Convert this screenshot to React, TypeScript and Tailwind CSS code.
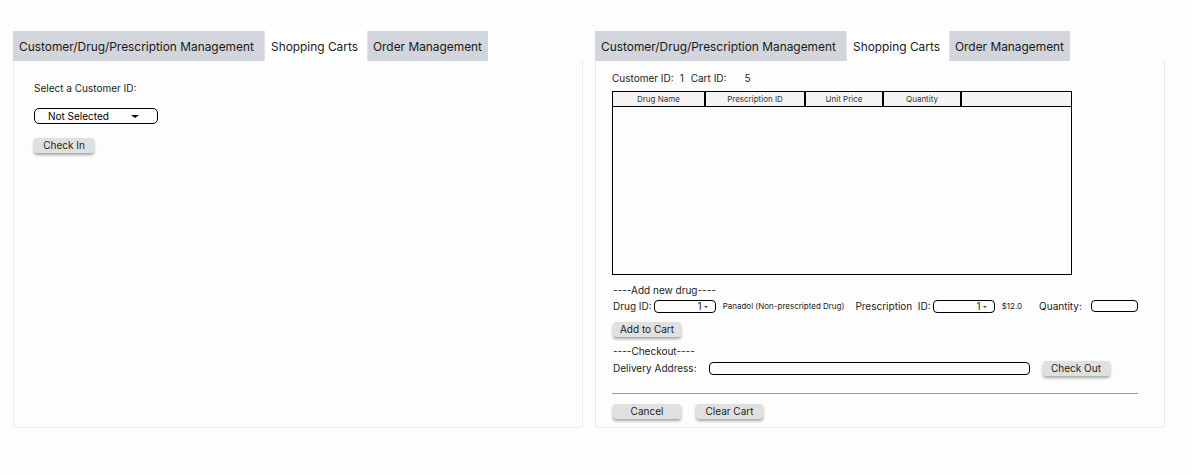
import React from "react";

const font = { fontFamily: "Inter, 'Noto Sans', sans-serif" };

function Tabs() {
  return (
    <div className="flex h-[30px] text-[11.9px] text-[#1a1a1a] whitespace-nowrap">
      <div className="w-[251px] bg-[#d2d5dc] flex items-center pl-[6px] pt-[1px]">Customer/Drug/Prescription Management</div>
      <div className="w-[104px] bg-white border-x-[1.5px] border-[#e2e2e2] flex items-center pl-[6px] pt-[1px]">Shopping Carts</div>
      <div className="w-[120px] bg-[#d2d5dc] flex items-center pl-[5px] pt-[1px]">Order Management</div>
    </div>
  );
}

function Btn({ children, w }: { children: React.ReactNode; w: string }) {
  return (
    <div className={`${w} h-[15px] bg-[#e0e0e0] rounded-[3px] shadow-[0_2px_3px_rgba(0,0,0,0.35)] flex items-center justify-center text-[10px] text-[#222] whitespace-nowrap`}>
      {children}
    </div>
  );
}

function MiniSelect({ w }: { w: string }) {
  return (
    <div className={`${w} h-[13px] border border-black rounded-[4px] flex items-center justify-end pr-[7px] text-[10px] leading-none`}>
      <span>1</span>
      <span className="ml-[2px] mt-[1px] w-0 h-0 border-l-[2px] border-r-[2px] border-t-[2px] border-l-transparent border-r-transparent border-t-[#444]"></span>
    </div>
  );
}

function LeftPanel() {
  return (
    <div className="w-[570px]">
      <Tabs />
      <div className="h-[367px] border border-[#ececec] border-t-0 rounded-b-[4px] pt-[21px] pl-[20px]">
        <div className="text-[10px] text-[#222] leading-[12px]">Select a Customer ID:</div>
        <div className="mt-[14px] w-[124px] h-[16px] border border-black rounded-[5px] flex items-center text-[10px] pl-[13px]">
          <span>Not Selected</span>
          <span className="ml-[22px] w-0 h-0 border-l-[4px] border-r-[4px] border-t-[3px] border-l-transparent border-r-transparent border-t-black"></span>
        </div>
        <div className="mt-[14px]">
          <Btn w="w-[60px]">Check In</Btn>
        </div>
      </div>
    </div>
  );
}

function RightPanel() {
  const cols = [
    { n: "Drug Name", w: "w-[93px]" },
    { n: "Prescription ID", w: "w-[100px]" },
    { n: "Unit Price", w: "w-[78px]" },
    { n: "Quantity", w: "w-[78px]" },
    { n: "", w: "flex-1" },
  ];
  return (
    <div className="w-[570px]">
      <Tabs />
      <div className="h-[367px] border border-[#ececec] border-t-0 rounded-b-[4px] pt-[11px] pl-[16px] pr-[26px] text-[#222]">
        <div className="text-[10px] leading-[12px] flex whitespace-nowrap">
          <span>Customer ID:</span>
          <span className="ml-[6px]">1</span>
          <span className="ml-[7px]">Cart ID:</span>
          <span className="ml-[18px]">5</span>
        </div>
        <div className="mt-[7px] w-[460px] h-[184px] border border-black flex flex-col">
          <div className="h-[15px] bg-[#f4f4f4] border-b border-black flex text-[8px] text-[#333]">
            {cols.map((c, i) => (
              <div key={i} className={`${c.w} ${i < 4 ? "border-r-[2px] border-black" : ""} flex items-center justify-center`}>{c.n}</div>
            ))}
          </div>
          <div className="flex-1" />
        </div>
        <div className="mt-[9px] text-[10px] leading-[12px] pl-[1px]">----Add new drug----</div>
        <div className="mt-[3px] flex items-center text-[10px] pl-[1px] h-[14px] whitespace-nowrap">
          <span>Drug ID:</span>
          <div className="ml-[2px]"><MiniSelect w="w-[62px]" /></div>
          <span className="ml-[7px] text-[8px]">Panadol (Non-prescripted Drug)</span>
          <span className="ml-[11px] whitespace-pre">Prescription  ID:</span>
          <div className="ml-[2px]"><MiniSelect w="w-[62px]" /></div>
          <span className="ml-[7px] text-[8px]">$12.0</span>
          <span className="ml-[17px]">Quantity:</span>
          <div className="ml-[9px] w-[48px] h-[12px] border border-black rounded-[4px]" />
        </div>
        <div className="mt-[9px] pl-[1px]">
          <Btn w="w-[68px]">Add to Cart</Btn>
        </div>
        <div className="mt-[8px] text-[10px] leading-[12px] pl-[1px]">----Checkout----</div>
        <div className="mt-[3px] flex items-center text-[10px] pl-[1px] h-[16px] whitespace-nowrap">
          <span>Delivery Address:</span>
          <div className="ml-[12px] w-[321px] h-[13px] border border-black rounded-[4px]" />
          <div className="ml-[13px]"><Btn w="w-[67px]">Check Out</Btn></div>
        </div>
        <div className="mt-[17px] h-px w-[526px] bg-[#9a9a9a]" />
        <div className="mt-[10px] pl-[1px] flex gap-[15px]">
          <Btn w="w-[68px]">Cancel</Btn>
          <Btn w="w-[67px]">Clear Cart</Btn>
        </div>
      </div>
    </div>
  );
}

export default function App() {
  return (
    <div style={font} className="w-[1192px] h-[475px] bg-[#fdfdfd] pt-[31px] pl-[13px] flex gap-[12px]">
      <LeftPanel />
      <RightPanel />
    </div>
  );
}
